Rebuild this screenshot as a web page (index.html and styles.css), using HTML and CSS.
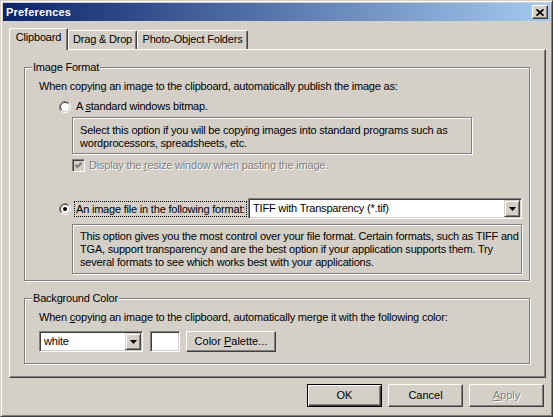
FILE: index.html
```html
<!DOCTYPE html>
<html lang="en">
<head>
    <meta charset="UTF-8">
    <meta name="viewport" content="width=device-width, initial-scale=1.0">
    <title>Preferences</title>
    <link rel="stylesheet" href="styles.css">
</head>
<body>
    <div class="window">
        <div class="titlebar">
            <span class="title">Preferences</span>
            <button class="close" type="button">
                <svg width="8" height="7" viewBox="0 0 8 7">
                    <path d="M0.5 0.3 L7.5 6.7 M7.5 0.3 L0.5 6.7" stroke="#000" stroke-width="1.7" fill="none"/>
                </svg>
            </button>
        </div>

        <div class="client">
            <div class="tabs">
                <div class="tab tab-active tab-clip">Clipboard</div>
                <div class="tab tab-drag">Drag &amp; Drop</div>
                <div class="tab tab-folders">Photo-Object Folders</div>
            </div>

            <div class="panel">
                <fieldset class="group group-format">
                    <legend>Image Format</legend>
                    <p class="line">When copying an image to the clipboard, automatically publish the image as:</p>

                    <div class="option option-bitmap">
                        <svg class="radio" width="12" height="12" viewBox="0 0 12 12">
                            <circle cx="6" cy="6" r="4.5" fill="#fff"/>
                            <path d="M2.1 9.9 A5.5 5.5 0 0 1 9.9 2.1" stroke="#808080" fill="none"/>
                            <path d="M9.9 2.1 A5.5 5.5 0 0 1 2.1 9.9" stroke="#fff" fill="none"/>
                            <path d="M2.8 9.2 A4.5 4.5 0 0 1 9.2 2.8" stroke="#404040" fill="none"/>
                            <path d="M9.2 2.8 A4.5 4.5 0 0 1 2.8 9.2" stroke="#d4d0c8" fill="none"/>
                        </svg>
                        <span class="label">A <u>s</u>tandard windows bitmap.</span>
                    </div>

                    <div class="etched desc desc-bitmap">
                        Select this option if you will be copying images into standard programs such as<br>
                        wordprocessors, spreadsheets, etc.
                    </div>

                    <div class="check-row">
                        <span class="checkbox">
                            <svg width="7" height="7" viewBox="0 0 7 7">
                                <polyline points="0.4,2.9 2.5,5 6.6,0.9" stroke="#808080" stroke-width="2.2" fill="none"/>
                            </svg>
                        </span>
                        <span class="label label-disabled">Display the <u>r</u>esize window when pasting the image.</span>
                    </div>

                    <div class="option option-file">
                        <svg class="radio" width="12" height="12" viewBox="0 0 12 12">
                            <circle cx="6" cy="6" r="4.5" fill="#fff"/>
                            <path d="M2.1 9.9 A5.5 5.5 0 0 1 9.9 2.1" stroke="#808080" fill="none"/>
                            <path d="M9.9 2.1 A5.5 5.5 0 0 1 2.1 9.9" stroke="#fff" fill="none"/>
                            <path d="M2.8 9.2 A4.5 4.5 0 0 1 9.2 2.8" stroke="#404040" fill="none"/>
                            <path d="M9.2 2.8 A4.5 4.5 0 0 1 2.8 9.2" stroke="#d4d0c8" fill="none"/>
                            <circle cx="6" cy="6" r="2" fill="#000"/>
                        </svg>
                        <span class="label label-focus">An image file in the following format:</span>
                        <div class="combo combo-format">
                            <span class="combo-text">TIFF with Transparency (*.tif)</span>
                            <span class="drop">
                                <svg width="7" height="4" viewBox="0 0 7 4"><polygon points="0,0 7,0 3.5,4" fill="#000"/></svg>
                            </span>
                        </div>
                    </div>

                    <div class="etched desc desc-file">
                        This option gives you the most control over your file format. Certain formats, such as TIFF and<br>
                        TGA, support transparency and are the best option if your application supports them. Try<br>
                        several formats to see which works best with your applications.
                    </div>
                </fieldset>

                <fieldset class="group group-bg">
                    <legend>Background Color</legend>
                    <p class="line">When <u>c</u>opying an image to the clipboard, automatically merge it with the following color:</p>
                    <div class="color-row">
                        <div class="combo combo-color">
                            <span class="combo-text">white</span>
                            <span class="drop">
                                <svg width="7" height="4" viewBox="0 0 7 4"><polygon points="0,0 7,0 3.5,4" fill="#000"/></svg>
                            </span>
                        </div>
                        <div class="swatch"></div>
                        <button class="btn btn-palette" type="button">Color <u>P</u>alette...</button>
                    </div>
                </fieldset>
            </div>

            <div class="actions">
                <button class="btn btn-default" type="button">OK</button>
                <button class="btn" type="button">Cancel</button>
                <button class="btn" type="button" disabled><u>A</u>pply</button>
            </div>
        </div>
    </div>
</body>
</html>
```

FILE: styles.css
```css
* {
    box-sizing: border-box;
}
body {
    margin: 0;
    background: #d4d0c8;
    font-family: "Liberation Sans", Arial, sans-serif;
    font-size: 11px;
    line-height: 13px;
    letter-spacing: -0.2px;
    color: #000;
}
u {
    text-decoration-thickness: 1px;
    text-underline-offset: 1px;
}

/* window frame */
.window {
    width: 553px;
    height: 417px;
    padding: 2px;
    border: 1px solid;
    border-color: #d4d0c8 #404040 #404040 #d4d0c8;
    box-shadow: inset 1px 1px #fff, inset -1px -1px #808080;
    background: #d4d0c8;
}
.titlebar {
    height: 18px;
    display: flex;
    align-items: center;
    justify-content: space-between;
    padding-left: 3px;
    background: linear-gradient(to right, #0a246a, #a6caf0);
    color: #fff;
    font-weight: bold;
    letter-spacing: 0.2px;
}
.close {
    width: 16px;
    height: 14px;
    margin-right: 2px;
    padding: 0;
    display: flex;
    align-items: center;
    justify-content: center;
    background: #d4d0c8;
    border: 1px solid;
    border-color: #fff #404040 #404040 #fff;
    box-shadow: inset -1px -1px #808080;
}

.client {
    padding: 7px 4px 0 6px;
}

/* tabs */
.tabs {
    height: 21px;
    display: flex;
    align-items: flex-end;
}
.tab {
    height: 19px;
    padding-top: 2px;
    text-align: center;
    border-top: 1px solid #fff;
    border-left: 1px solid #fff;
    border-right: 1px solid #404040;
    border-radius: 2px 2px 0 0;
    box-shadow: inset -1px 0 #808080;
    white-space: nowrap;
}
.tab-active {
    height: 22px;
    margin-bottom: -1px;
    position: relative;
    z-index: 1;
    background: #d4d0c8;
}
.tab-clip {
    width: 59px;
}
.tab-drag {
    width: 69px;
}
.tab-folders {
    width: 111px;
}

.panel {
    height: 329px;
    padding: 11px 15px 0 14px;
    border-top: 1px solid #fff;
    border-left: 1px solid #fff;
    border-right: 1px solid #404040;
    border-bottom: 1px solid #404040;
    box-shadow: inset -1px -1px #808080;
}

/* group boxes */
.group {
    margin: 0;
    padding: 6px 0 6px 14px;
    border: 1px solid #808080;
    box-shadow: inset 1px 1px #fff, 1px 1px #fff;
}
.group legend {
    margin-left: -7px;
    padding: 0 1px;
    line-height: 13px;
    background: #d4d0c8;
}
.group-bg {
    margin-top: 11px;
    padding-bottom: 11px;
}
.line {
    margin: 0;
    white-space: nowrap;
}

.etched {
    border: 1px solid #808080;
    box-shadow: inset 1px 1px #fff, 1px 1px #fff;
}
.desc {
    margin-left: 33px;
    padding: 6px 0 0 7px;
    white-space: nowrap;
}
.desc-bitmap {
    width: 400px;
    height: 37px;
    margin-top: 4px;
}
.desc-file {
    width: 450px;
    height: 50px;
    margin-top: 5px;
    padding-top: 5px;
}

/* options */
.option {
    display: flex;
    align-items: center;
    white-space: nowrap;
}
.radio {
    flex: none;
    margin-left: 20px;
}
.option-bitmap {
    margin-top: 7px;
    height: 13px;
}
.option-bitmap .label {
    margin-left: 5px;
}
.option-file {
    width: 483px;
    height: 21px;
    margin-top: 26px;
}
.label-focus {
    margin-left: 4px;
    padding: 1px 1px 0;
    outline: 1px dotted #000;
    outline-offset: 0;
}

.check-row {
    display: flex;
    align-items: center;
    height: 13px;
    margin: 5px 0 0 33px;
    white-space: nowrap;
}
.checkbox {
    width: 13px;
    height: 13px;
    flex: none;
    display: flex;
    align-items: center;
    justify-content: center;
    border: 1px solid;
    border-color: #808080 #fff #fff #808080;
    box-shadow: inset 1px 1px #404040, inset -1px -1px #d4d0c8;
    background: #d4d0c8;
}
.label-disabled {
    margin-left: 4px;
    color: #808080;
    text-shadow: 1px 1px 0 #fff;
}

/* combo boxes */
.combo {
    height: 21px;
    display: flex;
    padding: 1px;
    border: 1px solid;
    border-color: #808080 #fff #fff #808080;
    box-shadow: inset 1px 1px #404040, inset -1px -1px #d4d0c8;
    background: #fff;
}
.combo-format {
    width: 274px;
    margin-left: auto;
}
.combo-color {
    width: 104px;
}
.combo-text {
    flex: 1;
    padding-left: 3px;
    line-height: 17px;
    white-space: nowrap;
}
.drop {
    width: 16px;
    height: 17px;
    display: flex;
    align-items: center;
    justify-content: center;
    background: #d4d0c8;
    border: 1px solid;
    border-color: #d4d0c8 #404040 #404040 #d4d0c8;
    box-shadow: inset 1px 1px #fff, inset -1px -1px #808080;
}

.color-row {
    display: flex;
    margin-top: 7px;
}
.swatch {
    width: 30px;
    height: 21px;
    margin-left: 7px;
    border: 1px solid;
    border-color: #808080 #fff #fff #808080;
    box-shadow: inset 1px 1px #404040, inset -1px -1px #d4d0c8;
    background: #fff;
}

/* push buttons */
.btn {
    height: 23px;
    width: 75px;
    padding: 0;
    font: inherit;
    color: #000;
    background: #d4d0c8;
    border: 1px solid;
    border-color: #fff #404040 #404040 #fff;
    box-shadow: inset -1px -1px #808080;
}
.btn-palette {
    width: 90px;
    height: 21px;
    margin-left: 6px;
}
.btn-default {
    border-color: #000;
    box-shadow: inset 1px 1px #fff, inset -1px -1px #404040, inset -2px -2px #808080;
}
.btn:disabled {
    color: #808080;
    text-shadow: 1px 1px 0 #fff;
}

.actions {
    display: flex;
    justify-content: flex-end;
    gap: 6px;
    margin: 6px 2px 0 0;
}
```
